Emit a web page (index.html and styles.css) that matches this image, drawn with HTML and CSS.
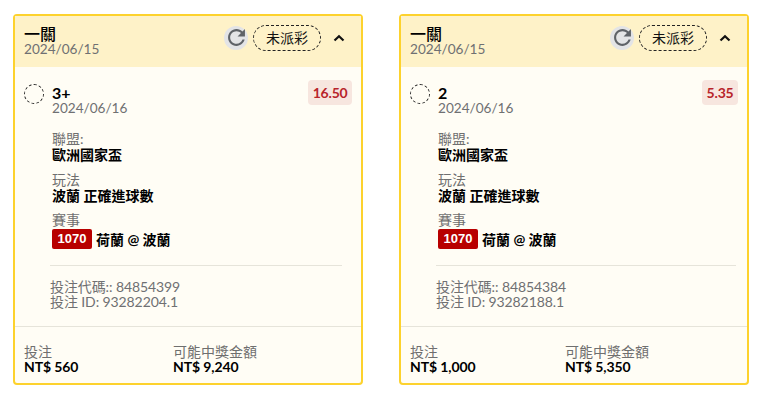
FILE: index.html
```html
<!DOCTYPE html>
<html lang="zh-Hant">
<head>
    <meta charset="UTF-8">
    <title>投注記錄</title>
    <link rel="stylesheet" href="styles.css">
</head>
<body>
    <div class="bet-list">
        <div class="bet-card">
            <div class="bet-header">
                <div class="bet-title">
                    <div class="title-main">一關</div>
                    <div class="date">2024/06/15</div>
                </div>
                <div class="refresh-btn">
                    <svg width="19" height="19" viewBox="3 3 18 18"><path d="M17.65 6.35C16.2 4.9 14.21 4 12 4c-4.42 0-7.99 3.58-7.99 8s3.57 8 7.99 8c3.73 0 6.84-2.55 7.73-6h-2.08c-.82 2.33-3.04 4-5.65 4-3.31 0-6-2.69-6-6s2.69-6 6-6c1.66 0 3.14.69 4.22 1.78L13 11h7V4l-2.35 2.35z" fill="#5f6368"/></svg>
                </div>
                <div class="status-pill">未派彩</div>
                <svg class="chevron" width="12" height="8" viewBox="0 0 12 8"><path d="M1.5 6.5L6 2.2L10.5 6.5" fill="none" stroke="#111" stroke-width="2.2"/></svg>
            </div>
            <div class="bet-body">
                <div class="pick-row">
                    <div class="pick-circle"></div>
                    <div class="pick-info">
                        <div class="pick-name">3+</div>
                        <div class="date">2024/06/16</div>
                    </div>
                    <div class="odds">16.50</div>
                </div>
                <div class="details">
                    <div class="label">聯盟:</div>
                    <div class="value">歐洲國家盃</div>
                    <div class="label">玩法</div>
                    <div class="value">波蘭 正確進球數</div>
                    <div class="label">賽事</div>
                    <div class="value match"><span class="match-no">1070</span>荷蘭 @ 波蘭</div>
                </div>
                <div class="bet-ids">
                    <div>投注代碼:: 84854399</div>
                    <div>投注 ID: 93282204.1</div>
                </div>
            </div>
            <div class="bet-footer">
                <div class="stake">
                    <div class="label">投注</div>
                    <div class="amount">NT$ 560</div>
                </div>
                <div class="payout">
                    <div class="label">可能中獎金額</div>
                    <div class="amount">NT$ 9,240</div>
                </div>
            </div>
        </div>

        <div class="bet-card">
            <div class="bet-header">
                <div class="bet-title">
                    <div class="title-main">一關</div>
                    <div class="date">2024/06/15</div>
                </div>
                <div class="refresh-btn">
                    <svg width="19" height="19" viewBox="3 3 18 18"><path d="M17.65 6.35C16.2 4.9 14.21 4 12 4c-4.42 0-7.99 3.58-7.99 8s3.57 8 7.99 8c3.73 0 6.84-2.55 7.73-6h-2.08c-.82 2.33-3.04 4-5.65 4-3.31 0-6-2.69-6-6s2.69-6 6-6c1.66 0 3.14.69 4.22 1.78L13 11h7V4l-2.35 2.35z" fill="#5f6368"/></svg>
                </div>
                <div class="status-pill">未派彩</div>
                <svg class="chevron" width="12" height="8" viewBox="0 0 12 8"><path d="M1.5 6.5L6 2.2L10.5 6.5" fill="none" stroke="#111" stroke-width="2.2"/></svg>
            </div>
            <div class="bet-body">
                <div class="pick-row">
                    <div class="pick-circle"></div>
                    <div class="pick-info">
                        <div class="pick-name">2</div>
                        <div class="date">2024/06/16</div>
                    </div>
                    <div class="odds">5.35</div>
                </div>
                <div class="details">
                    <div class="label">聯盟:</div>
                    <div class="value">歐洲國家盃</div>
                    <div class="label">玩法</div>
                    <div class="value">波蘭 正確進球數</div>
                    <div class="label">賽事</div>
                    <div class="value match"><span class="match-no">1070</span>荷蘭 @ 波蘭</div>
                </div>
                <div class="bet-ids">
                    <div>投注代碼:: 84854384</div>
                    <div>投注 ID: 93282188.1</div>
                </div>
            </div>
            <div class="bet-footer">
                <div class="stake">
                    <div class="label">投注</div>
                    <div class="amount">NT$ 1,000</div>
                </div>
                <div class="payout">
                    <div class="label">可能中獎金額</div>
                    <div class="amount">NT$ 5,350</div>
                </div>
            </div>
        </div>
    </div>
</body>
</html>
```

FILE: styles.css
```css
body {
    font-family: Lato, "Noto Sans CJK TC", sans-serif;
    margin: 0;
    background-color: #fff;
    color: #6b6b6b;
    font-size: 14px;
    line-height: 14px;
}
.bet-list {
    display: flex;
    gap: 36px;
    padding: 14px 10px 0 13px;
}
.bet-card {
    width: 350px;
    height: 371px;
    box-sizing: border-box;
    border: 2px solid #fdd22d;
    border-radius: 4px;
    background-color: #fffdf5;
    display: flex;
    flex-direction: column;
}
.bet-header {
    display: flex;
    align-items: center;
    height: 51px;
    flex-shrink: 0;
    padding: 0 16px 0 9px;
    background-color: #fef2c8;
}
.bet-title {
    flex: 1;
    padding-bottom: 3px;
}
.title-main {
    color: #000;
    font-size: 16px;
    font-weight: 500;
    line-height: 17px;
}
.date {
    color: #6f7072;
    font-size: 13.6px;
    line-height: 14px;
}
.refresh-btn {
    width: 24px;
    height: 24px;
    margin-bottom: 8px;
    border-radius: 50%;
    background-color: #e3e4e6;
    display: flex;
    align-items: center;
    justify-content: center;
    margin-right: 5px;
}
.status-pill {
    width: 68px;
    height: 26px;
    margin-bottom: 7px;
    box-sizing: border-box;
    border: 1px dashed #222;
    border-radius: 13px;
    color: #111;
    text-align: center;
    line-height: 24px;
}
.chevron {
    margin-left: 12px;
    margin-bottom: 8px;
}
.bet-body {
    flex: 1;
    padding: 13px 9px 0;
}
.pick-row {
    display: flex;
    align-items: flex-start;
}
.pick-circle {
    width: 20px;
    height: 20px;
    box-sizing: border-box;
    border: 1px dashed #222;
    border-radius: 50%;
    margin-top: 4px;
    margin-right: 8px;
}
.pick-info {
    flex: 1;
}
.pick-name {
    color: #000;
    font-size: 16px;
    font-weight: 700;
    line-height: 19px;
    padding-top: 3px;
    margin-bottom: -1px;
}
.odds {
    height: 25px;
    padding: 0 4.5px;
    border-radius: 4px;
    background-color: #f7e6df;
    color: #b8242a;
    font-weight: 700;
    letter-spacing: -0.2px;
    line-height: 25px;
}
.details {
    margin: 17px 0 0 28px;
}
.label {
    color: #6f6f6f;
    line-height: 14px;
}
.value {
    color: #000;
    font-weight: 700;
    line-height: 17px;
    margin-bottom: 9.5px;
}
.match {
    display: flex;
    align-items: center;
    margin-top: 2px;
    margin-bottom: 0;
}
.match-no {
    width: 40px;
    height: 20px;
    margin-right: 4px;
    border-radius: 2px;
    background-color: #b80000;
    color: #fff;
    font-family: "Liberation Sans", sans-serif;
    font-size: 13px;
    line-height: 20px;
    text-align: center;
}
.bet-ids {
    margin: 16px 10px 0 26px;
    padding-top: 13px;
    border-top: 1px solid #e6e4da;
    color: #6f7072;
    letter-spacing: -0.1px;
}
.bet-card:last-child .bet-ids {
    margin-right: 2px;
}
.bet-ids div {
    line-height: 15px;
}
.bet-footer {
    display: flex;
    height: 57px;
    box-sizing: border-box;
    padding: 18px 9px 0;
    border-top: 1px solid #e6e4da;
}
.stake {
    width: 149px;
}
.bet-card:last-child .stake {
    width: 155px;
}
.amount {
    color: #000;
    font-weight: 700;
    line-height: 15px;
    letter-spacing: -0.1px;
}
```
